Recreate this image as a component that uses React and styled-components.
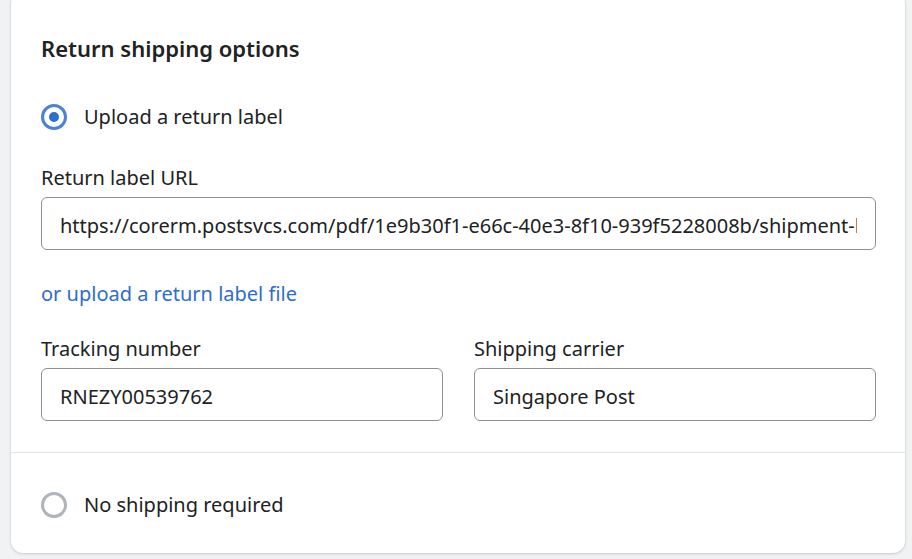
import React from "react";
import styled, { createGlobalStyle } from "styled-components";

const GlobalStyle = createGlobalStyle`
  html, body {
    margin: 0;
    padding: 0;
    background: #f1f2f4;
    font-family: "Noto Sans", "Open Sans", sans-serif;
    color: #202223;
  }
`;

const Page = styled.div`
  padding: 0 7px 6px 11px;
  height: 559px;
  box-sizing: border-box;
  overflow: hidden;
`;

const Card = styled.div`
  background: #ffffff;
  border-radius: 12px;
  box-shadow: 0 1px 3px rgba(0, 0, 0, 0.14), 0 0 0 1px rgba(0, 0, 0, 0.03);
  margin-top: -8px;
`;

const Section = styled.div`
  padding: ${(p) => p.$pad || "30px"};
  display: flex;
  flex-direction: column;
  border-top: ${(p) => (p.$divided ? "1px solid #e1e3e5" : "none")};
`;

const Title = styled.h2`
  margin: 0;
  font-size: 22px;
  font-weight: 600;
  line-height: 28px;
`;

const Option = styled.label`
  display: flex;
  align-items: center;
  gap: 17px;
  font-size: 20px;
  line-height: 28px;
  margin-top: ${(p) => p.$top || 0}px;
  cursor: pointer;
`;

const Radio = styled.span`
  width: 26px;
  height: 26px;
  flex: none;
  box-sizing: border-box;
  border-radius: 50%;
  border: 3px solid ${(p) => (p.$checked ? "#4a82d4" : "#aeb4b9")};
  display: flex;
  align-items: center;
  justify-content: center;

  &::after {
    content: "";
    width: 10px;
    height: 10px;
    border-radius: 50%;
    background: ${(p) => (p.$checked ? "#2c6ecb" : "transparent")};
  }
`;

const Field = styled.div`
  display: flex;
  flex-direction: column;
  gap: 6px;
  flex: 1;
  min-width: 0;
  margin-top: ${(p) => p.$top || 0}px;
`;

const Label = styled.div`
  font-size: 20px;
  line-height: 26px;
`;

const Input = styled.input`
  height: 53px;
  width: 100%;
  box-sizing: border-box;
  border: 1px solid #8c9196;
  border-radius: 6px;
  padding: 3px 18px 0;
  font-family: inherit;
  font-size: 20px;
  color: #202223;
  background: #ffffff;
  outline: none;
`;

const Link = styled.a`
  color: #2c6ecb;
  font-size: 20px;
  line-height: 26px;
  margin-top: 31px;
  text-decoration: none;
  cursor: pointer;
`;

const Row = styled.div`
  display: flex;
  gap: 31px;
  margin-top: 29px;
`;

export default function App() {
  return (
    <>
      <GlobalStyle />
      <Page>
        <Card>
          <Section $pad="42px 29px 31px 30px">
            <Title>Return shipping options</Title>
            <Option $top={41}>
              <Radio $checked />
              Upload a return label
            </Option>
            <Field $top={34}>
              <Label>Return label URL</Label>
              <Input
                readOnly
                value="https://corerm.postsvcs.com/pdf/1e9b30f1-e66c-40e3-8f10-939f5228008b/shipment-label.pdf"
              />
            </Field>
            <Link>or upload a return label file</Link>
            <Row>
              <Field>
                <Label>Tracking number</Label>
                <Input readOnly value="RNEZY00539762" />
              </Field>
              <Field>
                <Label>Shipping carrier</Label>
                <Input readOnly value="Singapore Post" />
              </Field>
            </Row>
          </Section>
          <Section $divided $pad="38px 30px 34px">
            <Option>
              <Radio />
              No shipping required
            </Option>
          </Section>
        </Card>
      </Page>
    </>
  );
}
